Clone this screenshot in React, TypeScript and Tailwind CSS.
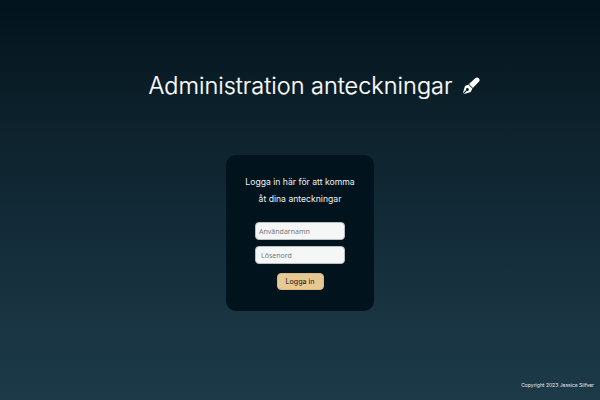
function PenIcon() {
  return (
    <svg viewBox="0 0 18 18" className="h-[18px] w-[18px]" fill="#fff">
      <path d="M13.2 1.3a2.5 2.5 0 0 1 3.6 3.5L10.9 10.9 7 7Z" />
      <path
        fillRule="evenodd"
        d="M6.4 7.5 10.4 11.5 8.7 15 1.6 17.2 4.9 13.8a1.4 1.4 0 1 0-.8-.8L.8 16.4 3 9.1Z"
      />
    </svg>
  );
}

export default function App() {
  return (
    <div className="flex h-[400px] w-[600px] flex-col items-center overflow-hidden bg-[linear-gradient(to_bottom,#01131c_0%,#0a1d27_20%,#112935_50%,#193341_78%,#1c3a48_100%)] font-['Inter',sans-serif] text-white">
      <header className="mt-[68px] ml-[29px] flex h-9 items-center gap-[10px]">
        <h1 className="text-[23.5px] leading-9 font-light whitespace-nowrap [-webkit-text-stroke:0.2px_white]">Administration anteckningar</h1>
        <PenIcon />
      </header>

      <form className="mt-[51px] flex h-[156px] w-[148px] shrink-0 flex-col items-center rounded-[10px] bg-[#01131c] pt-[18.5px]">
        <p className="w-[116px] text-center text-[8.65px] leading-[17px] text-[#eef2f4]">
          Logga in här för att komma åt dina anteckningar
        </p>
        <input
          placeholder="Användarnamn"
          className="mt-[14.5px] h-[18px] w-[90px] shrink-0 rounded-[4px] border border-[#b9bec1] bg-[#f5f6f6] px-[3px] font-['Noto_Sans',sans-serif] text-[7px] placeholder:text-[#777]"
        />
        <input
          type="text"
          placeholder="Lösenord"
          className="mt-[6px] h-[18px] w-[90px] shrink-0 rounded-[4px] border border-[#b9bec1] bg-[#f5f6f6] px-[5px] font-['Noto_Sans',sans-serif] text-[7px] placeholder:text-[#777]"
        />
        <button
          type="button"
          className="mt-[9px] h-[17px] w-[47px] shrink-0 rounded-[4px] border border-[#d9b982] bg-[#e6c893] text-[7.1px] leading-[15px] text-[#111]"
        >
          Logga in
        </button>
      </form>

      <footer className="mt-auto mr-[6px] mb-[10px] self-end text-[5px] leading-[10px] whitespace-nowrap text-[#e6ecef]">
        Copyright 2023 Jessica Silfver
      </footer>
    </div>
  );
}
